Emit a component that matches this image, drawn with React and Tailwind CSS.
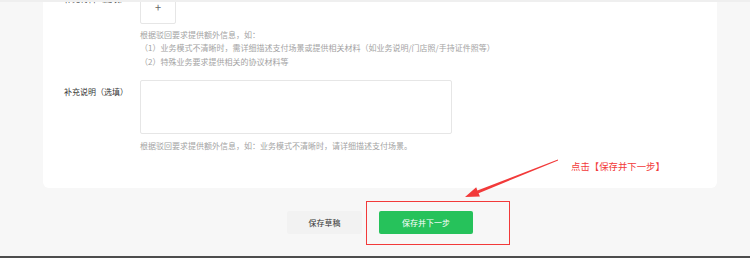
export default function App() {
  const font = { fontFamily: '"Noto Sans CJK SC", "Noto Sans", sans-serif' };

  return (
    <div
      className="relative w-[750px] h-[258px] overflow-hidden bg-[#f7f7f7] flex flex-col"
      style={font}
    >
      {/* header shadow */}
      <div className="absolute left-0 top-0 w-full h-[2px] bg-[#efefef]" />

      {/* form card */}
      <div className="ml-[43px] w-[674px] h-[188px] shrink-0 bg-white rounded-b-[6px] pl-[21px]">
        <div className="flex mt-[-12px]">
          <div className="w-[76px] pt-[5px] text-[8px] leading-[11px] text-[#333]">
            补充材料（选填）
          </div>
          <div>
            <div className="w-[36px] h-[36px] border border-[#e6e6e6] rounded-[2px] flex items-center justify-center pt-[3px] text-[#666] text-[11px] leading-none">
              +
            </div>
            <div className="mt-[4px] text-[8px] leading-[13.3px] text-[#a3a3a3]">
              <div>根据驳回要求提供额外信息，如：</div>
              <div>（1）业务模式不清晰时，需详细描述支付场景或提供相关材料（如业务说明/门店照/手持证件照等）</div>
              <div>（2）特殊业务要求提供相关的协议材料等</div>
            </div>
          </div>
        </div>

        <div className="flex mt-[12px]">
          <div className="w-[76px] pt-[6px] text-[8px] leading-[11px] text-[#333]">
            补充说明（选填）
          </div>
          <div>
            <div className="w-[312px] h-[54px] border border-[#e6e6e6] rounded-[2px]" />
            <div className="mt-[5px] text-[8px] leading-[13.3px] text-[#a3a3a3]">
              根据驳回要求提供额外信息，如：业务模式不清晰时，请详细描述支付场景。
            </div>
          </div>
        </div>
      </div>

      {/* actions */}
      <div className="ml-[43px] w-[674px] mt-[23px] flex justify-center gap-[17px]">
        <button className="w-[75px] h-[23px] rounded-[2px] bg-[#f2f2f2] text-[8px] text-[#333]">
          保存草稿
        </button>
        <button className="w-[94px] h-[23px] rounded-[2px] bg-[#26c25b] text-[8px] text-white">
          保存并下一步
        </button>
      </div>

      <div className="mt-auto h-[2px] bg-[#4d4d4d]" />

      {/* annotation */}
      <div className="absolute left-[366px] top-[201px] w-[144px] h-[44px] border-[1.5px] border-[#f23a3a]" />
      <div className="absolute left-[571px] top-[160px] text-[9.4px] leading-[12px] text-[#f23a3a] whitespace-nowrap">
        点击【保存并下一步】
      </div>
      <svg className="absolute left-0 top-0" width="750" height="258" viewBox="0 0 750 258">
        <polygon
          points="557.9,159.6 477.4,190.4 476.2,187.2 465,197 479.9,196.4 478.6,193.2 558.1,160.4"
          fill="#f23a3a"
        />
      </svg>
    </div>
  );
}
